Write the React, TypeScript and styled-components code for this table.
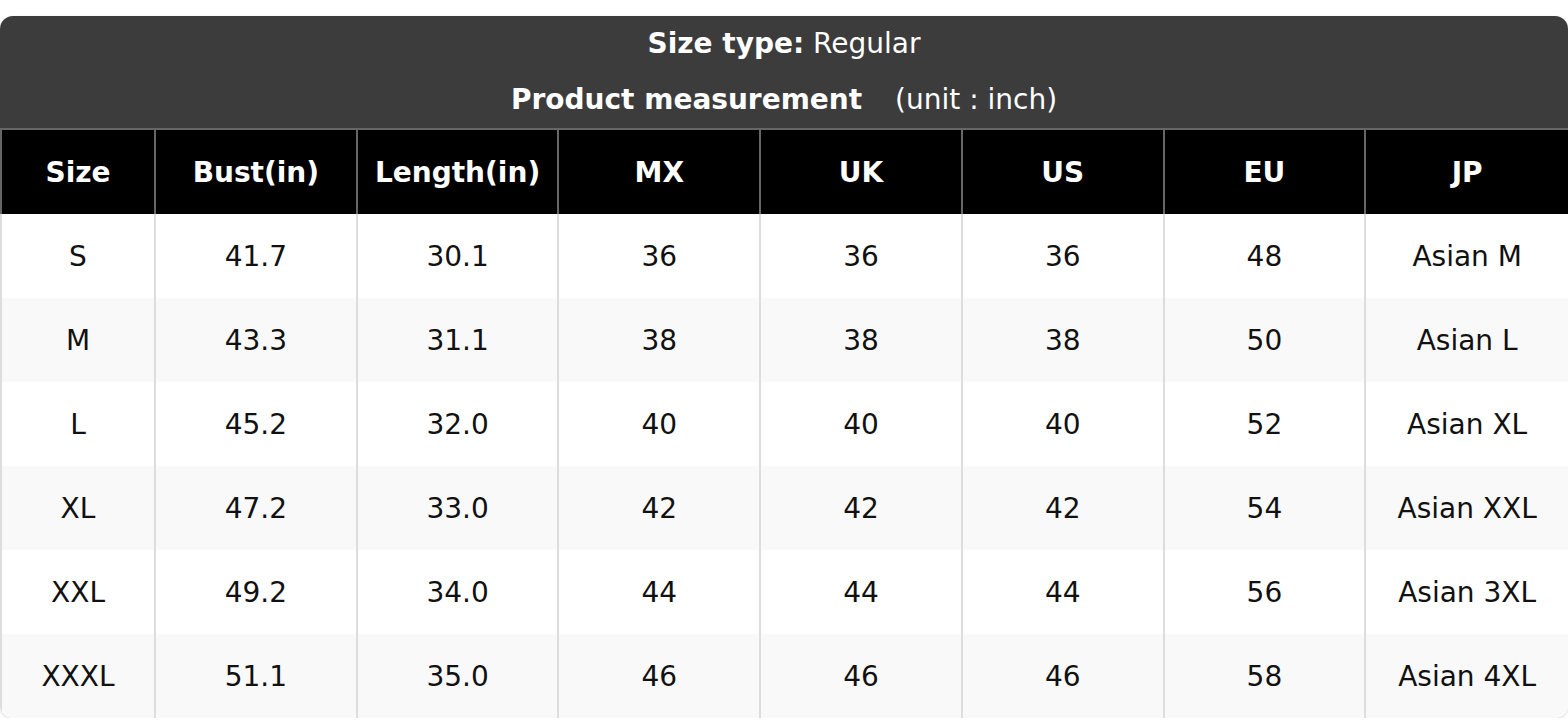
import React from 'react';
import styled, { createGlobalStyle } from 'styled-components';

const GlobalStyle = createGlobalStyle`
    html, body {
        margin: 0;
        padding: 0;
        background: #ffffff;
        font-family: 'DejaVu Sans', Verdana, sans-serif;
    }
`

const Wrapper = styled.div`
    margin-top: 16px;
    width: 100%;
    border-radius: 13px;
    overflow: hidden;
    box-shadow: 0 1px 3px rgba(0, 0, 0, 0.16);
    background: #ffffff;
`

const Caption = styled.div`
    background: #3c3c3c;
    color: #ffffff;
    text-align: center;
    font-size: 28px;
`

const CaptionLine = styled.div`
    height: 56px;
    line-height: 56px;
`

const Unit = styled.span`
    margin-left: 24px;
    font-weight: normal;
`

const Grid = styled.div`
    display: grid;
    grid-template-columns: 156px repeat(7, 1fr);
`

const Cell = styled.div<{ $head?: boolean; $first?: boolean; $alt?: boolean }>`
    display: flex;
    align-items: center;
    justify-content: center;
    height: ${p => (p.$head ? '84px' : '84px')};
    font-size: 28px;
    white-space: nowrap;
    font-weight: ${p => (p.$head ? 'bold' : 'normal')};
    color: ${p => (p.$head ? '#ffffff' : '#111111')};
    background: ${p => (p.$head ? '#000000' : p.$alt ? '#f9f9f9' : '#ffffff')};
    border-right: 2px solid ${p => (p.$head ? '#666666' : '#dddddd')};
    border-top: ${p => (p.$head ? '2px solid #666666' : 'none')};
    border-left: ${p => (p.$first ? `2px solid ${p.$head ? '#666666' : '#dddddd'}` : 'none')};
    &:nth-child(8n) {
        border-right: none;
    }
`

const headers = ['Size', 'Bust(in)', 'Length(in)', 'MX', 'UK', 'US', 'EU', 'JP'];

const rows = [
    ['S', '41.7', '30.1', '36', '36', '36', '48', 'Asian M'],
    ['M', '43.3', '31.1', '38', '38', '38', '50', 'Asian L'],
    ['L', '45.2', '32.0', '40', '40', '40', '52', 'Asian XL'],
    ['XL', '47.2', '33.0', '42', '42', '42', '54', 'Asian XXL'],
    ['XXL', '49.2', '34.0', '44', '44', '44', '56', 'Asian 3XL'],
    ['XXXL', '51.1', '35.0', '46', '46', '46', '58', 'Asian 4XL'],
];

export default function App() {
    return (
        <>
            <GlobalStyle />
            <Wrapper>
                <Caption>
                    <CaptionLine>
                        <b>Size type:</b> Regular
                    </CaptionLine>
                    <CaptionLine>
                        <b>Product measurement</b>
                        <Unit> (unit : inch)</Unit>
                    </CaptionLine>
                </Caption>
                <Grid>
                    {headers.map((h, i) => (
                        <Cell key={h} $head $first={i === 0}>{h}</Cell>
                    ))}
                    {rows.map((r, ri) =>
                        r.map((v, ci) => (
                            <Cell key={`${ri}-${ci}`} $first={ci === 0} $alt={ri % 2 === 1}>
                                {v}
                            </Cell>
                        ))
                    )}
                </Grid>
            </Wrapper>
        </>
    );
}
